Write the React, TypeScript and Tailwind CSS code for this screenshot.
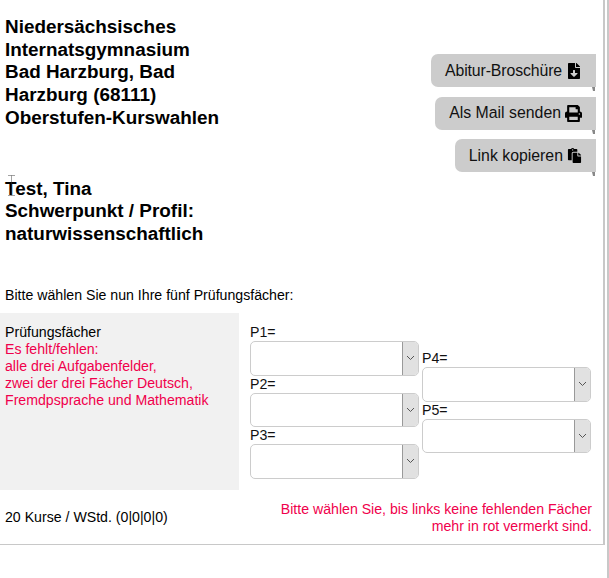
import { FaFileDownload, FaPrint, FaPaste } from "react-icons/fa";
import { ReactNode } from "react";

function Btn({ children, icon, textClass }: { children: ReactNode; icon: ReactNode; textClass?: string }) {
  return (
    <div className="relative flex h-[33px] items-center gap-[4px] rounded-l-[7px] bg-[#cccccc] pl-[14px] pr-[14px] text-[15.85px] text-[#111]">
      <span className={textClass}>{children}</span>
      {icon}
      <svg className="absolute right-[1px] bottom-[-4px]" width="3" height="4" viewBox="0 0 3 4">
        <path d="M0 0h3v4H1z" fill="#888" />
      </svg>
    </div>
  );
}

function Sel({ label }: { label: string }) {
  return (
    <div className="flex flex-col">
      <div className="h-[17px] text-[14.15px] leading-[17px] text-[#111]">{label}</div>
      <div className="flex h-[34.5px] w-[169px] overflow-hidden rounded-[5px] border border-[#ccc] bg-white">
        <div className="flex-1" />
        <div className="flex w-[16px] items-center justify-center border-l border-[#999] bg-[#e1e1e1]">
          <svg width="9" height="6" viewBox="0 0 9 6" fill="none" stroke="#555" strokeWidth="1">
            <path d="M1 1l3.5 3.5L8 1" />
          </svg>
        </div>
      </div>
    </div>
  );
}

export default function App() {
  return (
    <div className="relative h-[578px] w-[609px] overflow-hidden border-r-2 border-[#c8c8c8] bg-white font-['Liberation_Sans',Arial,sans-serif] text-[14.15px] text-black">
      <div className="h-[545px] w-[605px] border-r-2 border-b border-[#c8c8c8] pt-[16px]">
        <div className="flex justify-between">
          <div className="pl-[5px] text-[18.9px] leading-[22.7px] font-bold">
            <div>
              Niedersächsisches<br />Internatsgymnasium<br />Bad Harzburg, Bad<br />Harzburg (68111)<br />Oberstufen-Kurswahlen
            </div>
            <div className="mt-[48px]">
              Test, Tina<br />Schwerpunkt / Profil:<br />naturwissenschaftlich
            </div>
          </div>
          <div className="mt-[38px] mr-[7px] flex flex-col items-end gap-[9.5px]">
            <Btn textClass="tracking-[-0.12px]" icon={<FaFileDownload size={16} color="#000" />}>Abitur-Broschüre</Btn>
            <Btn icon={<FaPrint size={17} color="#000" />}>Als Mail senden</Btn>
            <Btn icon={<FaPaste size={15} color="#000" />}>Link kopieren</Btn>
          </div>
        </div>
        <div className="mt-[41px] pl-[5px] leading-[17px]">Bitte wählen Sie nun Ihre fünf Prüfungsfächer:</div>
        <div className="mt-[9px] flex h-[177px]">
          <div className="w-[239px] bg-[#f1f1f1] pt-[11px] pl-[5px] leading-[17px]">
            <div>Prüfungsfächer</div>
            <div className="text-[#f0004c]">
              Es fehlt/fehlen:<br />alle drei Aufgabenfelder,<br />zwei der drei Fächer Deutsch,<br />Fremdpsprache und Mathematik
            </div>
          </div>
          <div className="flex gap-[3px] pt-[11.5px] pl-[11px]">
            <div className="flex flex-col">
              <Sel label="P1=" />
              <Sel label="P2=" />
              <Sel label="P3=" />
            </div>
            <div className="flex flex-col pt-[26px]">
              <Sel label="P4=" />
              <Sel label="P5=" />
            </div>
          </div>
        </div>
        <div className="mt-[11px] flex items-center justify-between pr-[11px] pl-[5px]">
          <div>20 Kurse / WStd. (0|0|0|0)</div>
          <div className="w-[330px] text-right leading-[17px] text-[#f0004c]">
            Bitte wählen Sie, bis links keine fehlenden Fächer mehr in rot vermerkt sind.
          </div>
        </div>
      </div>
      <svg className="absolute top-[175px] left-[8px]" width="7" height="21" viewBox="0 0 7 21" fill="none" stroke="#333" strokeWidth="1">
        <path d="M0 .5h7M3.5 .5v20M0 20.5h7" opacity="0.45" />
      </svg>
    </div>
  );
}
